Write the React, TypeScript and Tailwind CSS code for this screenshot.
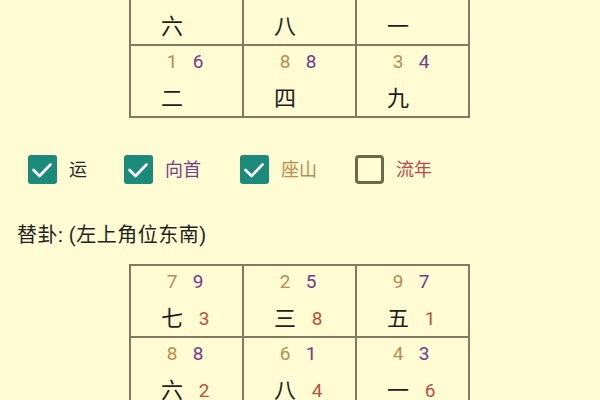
import React from 'react';

type Cell = {
  a: string;
  b: string;
  gua: string;
  c?: string;
};

// the first row's star numbers sit above the visible area
const topRows: Cell[][] = [
  [
    { a: '', b: '', gua: '六' },
    { a: '', b: '', gua: '八' },
    { a: '', b: '', gua: '一' },
  ],
  [
    { a: '1', b: '6', gua: '二' },
    { a: '8', b: '8', gua: '四' },
    { a: '3', b: '4', gua: '九' },
  ],
];

const bottomRows: Cell[][] = [
  [
    { a: '7', b: '9', gua: '七', c: '3' },
    { a: '2', b: '5', gua: '三', c: '8' },
    { a: '9', b: '7', gua: '五', c: '1' },
  ],
  [
    { a: '8', b: '8', gua: '六', c: '2' },
    { a: '6', b: '1', gua: '八', c: '4' },
    { a: '4', b: '3', gua: '一', c: '6' },
  ],
];

function ChartCell({ cell }: { cell: Cell }) {
  return (
    <div className="h-[70px] bg-[#fffbd2] pl-[28px] pt-[4px]">
      <div className="flex h-[24px] text-[19px] leading-[24px]">
        <span className="w-[26px] text-center text-[#b88d52]">{cell.a}</span>
        <span className="w-[26px] text-center text-[#76398e]">{cell.b}</span>
      </div>
      <div className="mt-[10px] flex h-[30px] leading-[30px]">
        <span className="w-[26px] text-center text-[22px] text-[#1d1d1d]">
          {cell.gua}
        </span>
        <span className="w-[38px] text-center text-[19px] text-[#b6523f]">
          {cell.c ?? ''}
        </span>
      </div>
    </div>
  );
}

function Chart({ rows, className }: { rows: Cell[][]; className?: string }) {
  return (
    <div
      className={
        'ml-[129px] grid w-[341px] grid-cols-3 gap-[2px] bg-[#7f7b63] p-[2px] ' +
        (className ?? '')
      }
    >
      {rows.flat().map((cell, i) => (
        <ChartCell key={i} cell={cell} />
      ))}
    </div>
  );
}

function Check({ checked }: { checked: boolean }) {
  if (!checked) {
    return (
      <div className="h-[29px] w-[29px] rounded-[4px] border-[3px] border-[#6d6a4c]" />
    );
  }
  return (
    <div className="flex h-[29px] w-[29px] items-center justify-center rounded-[3px] bg-[#1b8a7b]">
      <svg width="29" height="29" viewBox="0 0 29 29" fill="none">
        <path
          d="M5.5 15 L11.5 21 L22.5 9.5"
          stroke="white"
          strokeWidth="2.6"
          strokeLinecap="round"
          strokeLinejoin="round"
        />
      </svg>
    </div>
  );
}

const options = [
  { label: '运', color: 'text-[#262626]', checked: true, w: 'w-[96px]' },
  { label: '向首', color: 'text-[#7a3b8d]', checked: true, w: 'w-[116px]' },
  { label: '座山', color: 'text-[#bb8c4e]', checked: true, w: 'w-[115px]' },
  { label: '流年', color: 'text-[#b9494a]', checked: false, w: 'w-[110px]' },
];

export default function App() {
  return (
    <div
      className="h-[400px] w-[600px] overflow-hidden bg-[#fffbd2]"
      style={{ fontFamily: 'Roboto, "Noto Sans CJK SC", sans-serif' }}
    >
      <Chart rows={topRows} className="-mt-[28px]" />

      <div className="mt-[37px] flex pl-[28px]">
        {options.map((o) => (
          <div key={o.label} className={'flex items-center ' + o.w}>
            <Check checked={o.checked} />
            <span className={'ml-[12px] text-[18px] leading-[28px] ' + o.color}>
              {o.label}
            </span>
          </div>
        ))}
      </div>

      <div className="mt-[37px] pl-[17px] text-[20px] leading-[28px] tracking-[0.5px] text-[#1f1f1f]">
        替卦: (左上角位东南)
      </div>

      <Chart rows={bottomRows} className="mt-[15px]" />
    </div>
  );
}
